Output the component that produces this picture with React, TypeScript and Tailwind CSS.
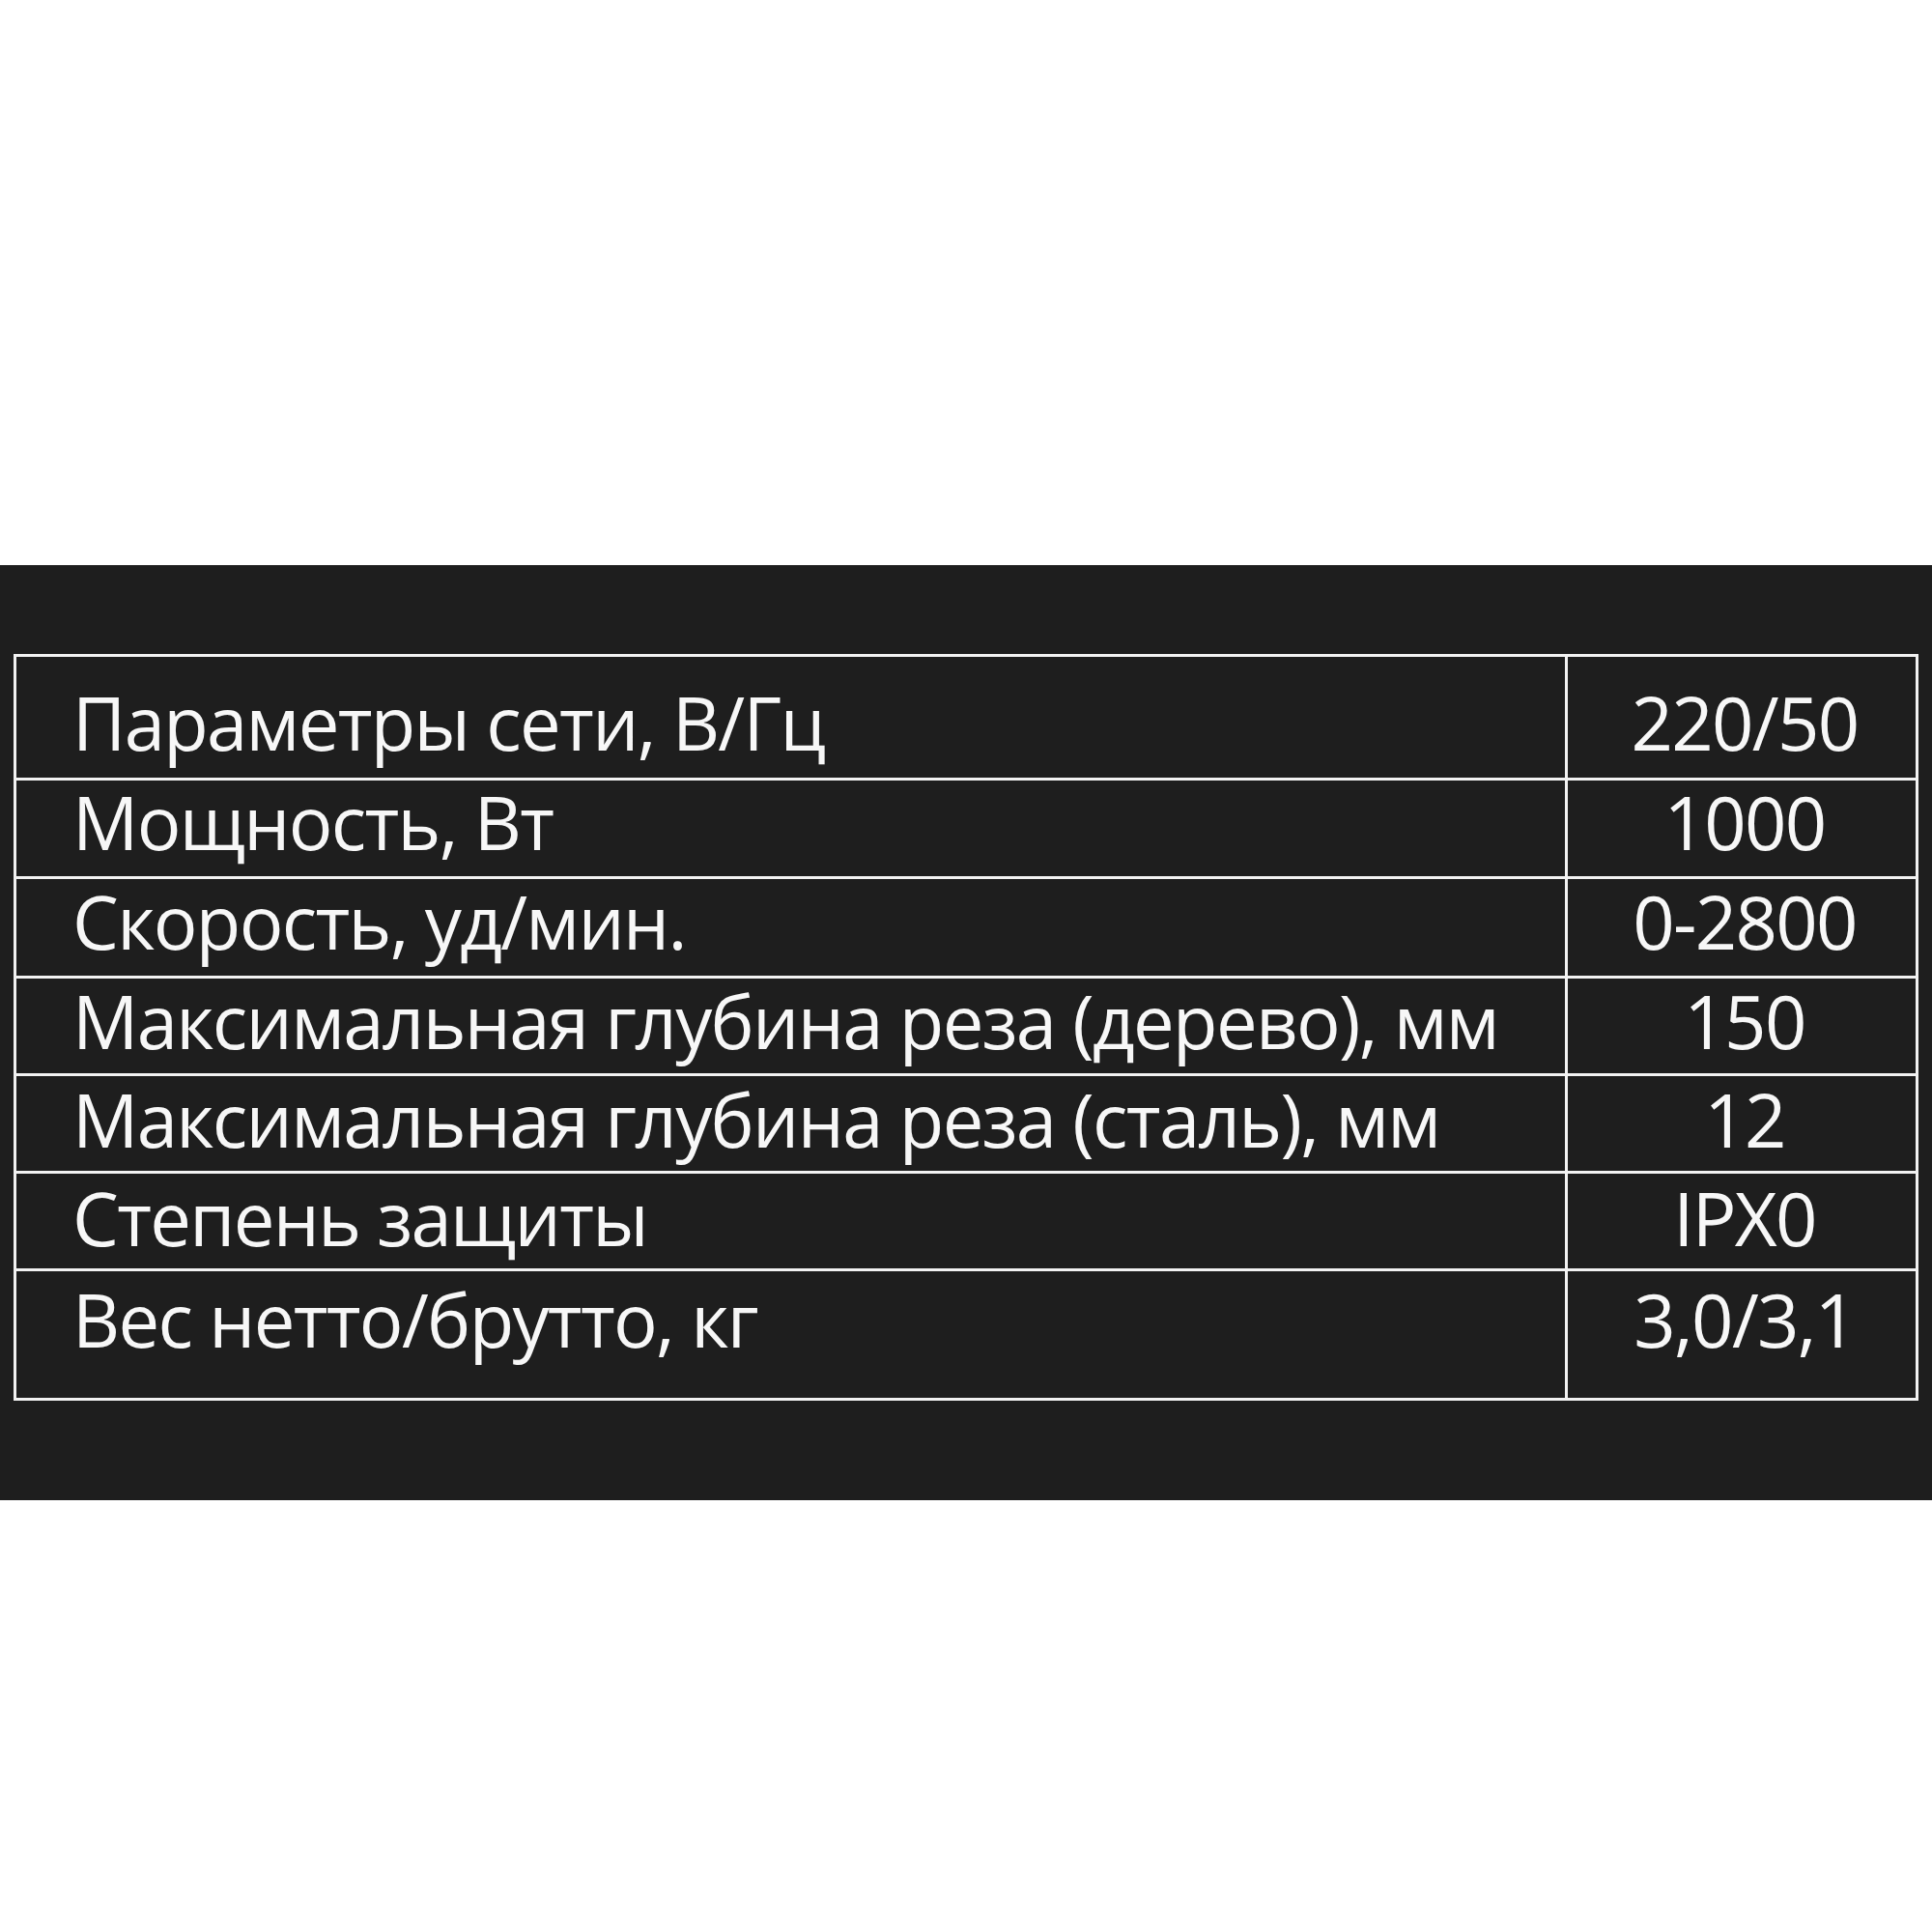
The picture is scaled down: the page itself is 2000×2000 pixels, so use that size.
const ROWS = [
  { label: 'Параметры сети, В/Гц', value: '220/50', h: 'h-[128px]', pt: 'pt-[30px]' },
  { label: 'Мощность, Вт', value: '1000', h: 'h-[102px]', pt: 'pt-[5px]' },
  { label: 'Скорость, уд/мин.', value: '0-2800', h: 'h-[103px]', pt: 'pt-[6px]' },
  { label: 'Максимальная глубина реза (дерево), мм', value: '150', h: 'h-[101px]', pt: 'pt-[6px]' },
  { label: 'Максимальная глубина реза (сталь), мм', value: '12', h: 'h-[101px]', pt: 'pt-[7px]' },
  { label: 'Степень защиты', value: 'IPX0', h: 'h-[101px]', pt: 'pt-[8px]' },
  { label: 'Вес нетто/брутто, кг', value: '3,0/3,1', h: 'h-[131px]', pt: 'pt-[12px]' },
];

export default function App() {
  return (
    <div className="w-[2000px] h-[2000px] bg-white flex flex-col" style={{ fontFamily: '"Open Sans", "Noto Sans", sans-serif' }}>
      <div className="h-[585px] shrink-0" />
      <div className="h-[968px] shrink-0 bg-[#1e1e1e] pt-[92px] pl-[14px]">
        {/* spec table */}
        <div className="w-[1972px] border-[3px] border-[#f2f2f2] text-[#f7f7f7] text-[76px] leading-none tracking-[-0.022em]">
          {ROWS.map((r, i) => (
            <div
              key={r.label}
              className={`flex ${r.h} ${i < ROWS.length - 1 ? 'border-b-[3px] border-[#f2f2f2]' : ''}`}
            >
              <div className={`w-[1603px] shrink-0 pl-[58px] whitespace-nowrap ${r.pt}`}>{r.label}</div>
              <div className={`flex-1 border-l-[3px] border-[#f2f2f2] text-center pl-[6px] ${r.pt}`}>{r.value}</div>
            </div>
          ))}
        </div>
      </div>
      <div className="flex-1" />
    </div>
  );
}
